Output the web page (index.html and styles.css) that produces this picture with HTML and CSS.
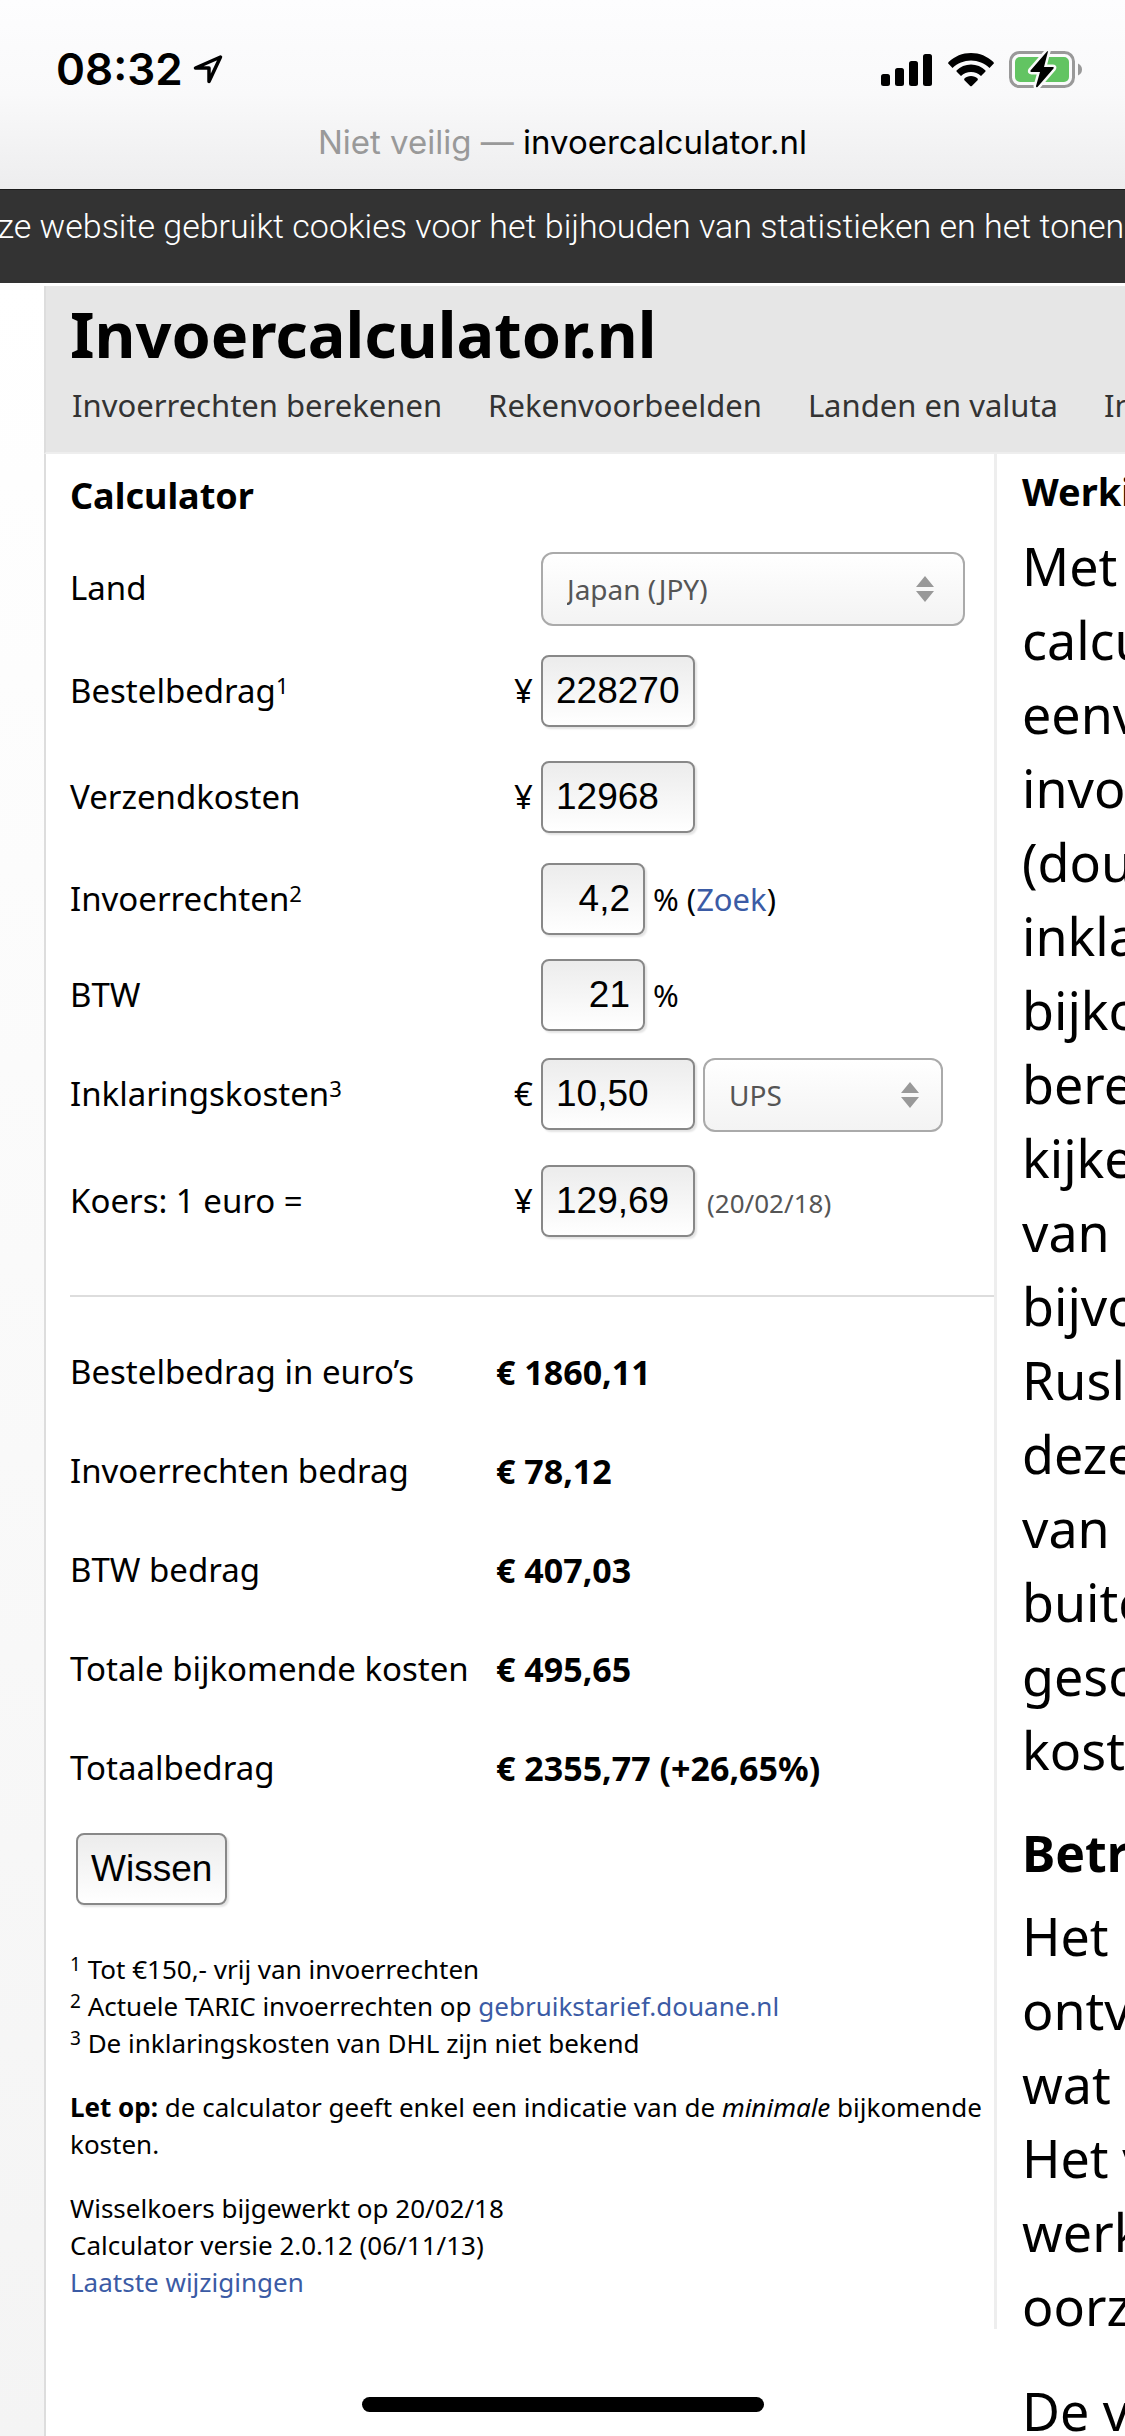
FILE: index.html
```html
<!DOCTYPE html>
<html lang="nl">
<head>
<meta charset="utf-8">
<meta name="viewport" content="width=device-width, initial-scale=1">
<title>Invoercalculator.nl</title>
<link rel="stylesheet" href="styles.css">
</head>
<body>
<div class="screen">
  <div class="browser-bar">
    <div class="status">
      <div class="status-time">
        <span>08:32</span>
        <svg class="icon-location" viewBox="0 0 30 30" aria-hidden="true"><path d="M27.500 3 2.500 14H16V27.500Z" fill="none" stroke="#000" stroke-width="3.500" stroke-linejoin="round"/></svg>
      </div>
      <div class="status-icons">
        <svg class="icon-signal" viewBox="0 0 52 36" aria-hidden="true"><rect x="0" y="23" width="9" height="12" rx="2.500"/><rect x="14" y="17" width="9" height="18" rx="2.500"/><rect x="28" y="10" width="9" height="25" rx="2.500"/><rect x="42" y="3" width="9" height="32" rx="2.500"/></svg>
        <svg class="icon-wifi" viewBox="0 0 46 36" aria-hidden="true"><path d="M23 2C14.500 2 6.600 5.300.600 11L0 12.300 4.500 17C9.500 12.300 16 9.500 23 9.500S36.500 12.300 41.500 17L46 12.300 45.400 11C39.400 5.300 31.500 2 23 2Z"/><path d="M23 13.500C17.500 13.500 12.300 15.700 8.500 19.500V20.500L13 25C15.700 22.400 19.200 21 23 21S30.300 22.400 33 25L37.500 20.500V19.500C33.700 15.700 28.500 13.500 23 13.500Z"/><path d="M23 25C20.400 25 18 26 16.200 27.700V29L22.200 35Q23 35.700 23.800 35L29.800 29V27.700C28 26 25.600 25 23 25Z"/></svg>
        <svg class="icon-battery" viewBox="0 0 74 40" aria-hidden="true"><rect x="1.500" y="3.500" width="63" height="34" rx="9" fill="none" stroke="#999" stroke-width="3"/><rect x="6" y="8" width="54" height="25" rx="5" fill="#62c462"/><path d="M69 14.500C72 16 73 18 73 20.500S72 25 69 26.500Z" fill="#999"/><path d="M39 2.500Q39.500 1.500 38 2.500L21.500 21.500Q21 23 22.500 23H31L27 37Q27 39 28.500 38L44.500 19.500Q45.500 18 44 18H35Z" fill="#000" stroke="#fafafa" stroke-width="5" stroke-linejoin="round" paint-order="stroke"/></svg>
      </div>
    </div>
    <div class="address"><span class="address-note">Niet veilig —</span> invoercalculator.nl</div>
  </div>
  <div class="cookie-bar"><p class="cookie-text">Deze website gebruikt cookies voor het bijhouden van statistieken en het tonen van</p></div>
  <div class="page">
    <header class="site-header">
      <h1 class="site-title">Invoercalculator.nl</h1>
      <nav class="site-nav">
        <a href="#berekenen">Invoerrechten berekenen</a>
        <a href="#voorbeelden">Rekenvoorbeelden</a>
        <a href="#landen">Landen en valuta</a>
        <a href="#informatie">Informatie</a>
      </nav>
    </header>
    <div class="columns">
      <main class="calculator">
        <h2 class="calc-title">Calculator</h2>
        <form class="calc-form">
          <div class="row row-short">
            <label for="land">Land</label>
            <div class="field"><span class="unit"></span><span class="select-wrap select-wide"><select id="land"><option>Japan (JPY)</option></select><svg class="arrows" viewBox="0 0 18 26" aria-hidden="true"><path d="M9 0 18 11H0ZM0 15H18L9 26Z"/></svg></span></div>
          </div>
          <div class="row">
            <label for="bestel">Bestelbedrag<sup>1</sup></label>
            <div class="field"><span class="unit">¥</span><input class="amount" id="bestel" type="text" value="228270"></div>
          </div>
          <div class="row">
            <label for="verzend">Verzendkosten</label>
            <div class="field"><span class="unit">¥</span><input class="amount" id="verzend" type="text" value="12968"></div>
          </div>
          <div class="row row-short">
            <label for="rechten">Invoerrechten<sup>2</sup></label>
            <div class="field"><span class="unit"></span><input class="percent" id="rechten" type="text" value="4,2"><span class="suffix">% (<a href="#zoek">Zoek</a>)</span></div>
          </div>
          <div class="row row-shorter">
            <label for="btw">BTW</label>
            <div class="field"><span class="unit"></span><input class="percent" id="btw" type="text" value="21"><span class="suffix">%</span></div>
          </div>
          <div class="row">
            <label for="inklaring">Inklaringskosten<sup>3</sup></label>
            <div class="field"><span class="unit">€</span><input class="amount" id="inklaring" type="text" value="10,50"><span class="select-wrap select-small"><select aria-label="Vervoerder"><option>UPS</option></select><svg class="arrows" viewBox="0 0 18 26" aria-hidden="true"><path d="M9 0 18 11H0ZM0 15H18L9 26Z"/></svg></span></div>
          </div>
          <div class="row">
            <label for="koers">Koers: 1 euro =</label>
            <div class="field"><span class="unit">¥</span><input class="amount" id="koers" type="text" value="129,69"><span class="rate-date">(20/02/18)</span></div>
          </div>
          <hr class="rule">
          <dl class="results">
            <dt>Bestelbedrag in euro’s</dt><dd>€ 1860,11</dd>
            <dt>Invoerrechten bedrag</dt><dd>€ 78,12</dd>
            <dt>BTW bedrag</dt><dd>€ 407,03</dd>
            <dt>Totale bijkomende kosten</dt><dd>€ 495,65</dd>
            <dt>Totaalbedrag</dt><dd>€ 2355,77 (+26,65%)</dd>
          </dl>
          <button class="reset" type="reset">Wissen</button>
        </form>
        <div class="notes">
          <p><sup>1</sup> Tot €150,- vrij van invoerrechten<br><sup>2</sup> Actuele TARIC invoerrechten op <a href="#tarief">gebruikstarief.douane.nl</a><br><sup>3</sup> De inklaringskosten van DHL zijn niet bekend</p>
          <p><strong>Let op:</strong> de calculator geeft enkel een indicatie van de <em>minimale</em> bijkomende kosten.</p>
          <p>Wisselkoers bijgewerkt op 20/02/18<br>Calculator versie 2.0.12 (06/11/13)<br><a href="#wijzigingen">Laatste wijzigingen</a></p>
        </div>
      </main>
      <aside class="info">
        <h2>Werking</h2>
        <p>Met deze<br>calculator<br>eenvoudig<br>invoerrechten<br>(douane)<br>inklaringskosten<br>bijkomende<br>berekenen<br>kijken<br>van<br>bijvoorbeeld<br>Rusland<br>deze<br>van<br>buiten<br>geschatte<br>kosten</p>
        <h3>Betrouwbaar</h3>
        <p>Het bedrag<br>ontvangt<br>wat<br>Het verschil<br>werkelijke<br>oorzaken</p>
        <p>De valuta</p>
      </aside>
    </div>
  </div>
  <div class="home-indicator"></div>
</div>
</body>
</html>
```

FILE: styles.css
```css
* {
  box-sizing: border-box;
}

body {
  margin: 0;
  font-family: "Noto Sans", sans-serif;
  color: #000;
  background: #fff;
}

a {
  color: #3b5ba5;
  text-decoration: none;
}

h1, h2, h3, p, dl, dd {
  margin: 0;
}

.screen {
  position: relative;
  height: 100vh;
  display: flex;
  flex-direction: column;
  overflow: hidden;
}

.browser-bar {
  flex: none;
  height: 189px;
  padding-top: 40px;
  background: linear-gradient(#fdfdfe, #f9f9fa 50%, #ededee);
  font-family: Inter, sans-serif;
}

.status {
  display: flex;
  justify-content: space-between;
  align-items: center;
  height: 58px;
  padding: 0 42px 0 56px;
}

.status-time {
  display: flex;
  align-items: center;
  gap: 10px;
  font-size: 44px;
  font-weight: 600;
}

.status-icons {
  display: flex;
  align-items: center;
  gap: 15px;
}

.icon-location {
  width: 30px;
  height: 30px;
}

.icon-signal {
  width: 52px;
  height: 36px;
}

.icon-wifi {
  width: 46px;
  height: 36px;
}

.icon-battery {
  width: 74px;
  height: 40px;
}

.address {
  margin-top: 22px;
  font-size: 33px;
  line-height: 44px;
  text-align: center;
}

.address-note {
  color: #999;
}

.cookie-bar {
  flex: none;
  height: 94px;
  padding-left: 18px;
  border-top: 1px solid #1c1c1c;
  background: #333;
  display: flex;
  justify-content: center;
}

.cookie-text {
  padding-top: 14px;
  font: 300 34px/44px Roboto, sans-serif;
  color: #fff;
  white-space: nowrap;
}

.page {
  flex: 1;
  display: flex;
  flex-direction: column;
  min-height: 0;
  padding: 3px 0 0 44px;
  background: linear-gradient(#fff, #f4f4f4);
}

.site-header {
  flex: none;
  height: 168px;
  padding: 12px 0 0 24px;
  border-left: 2px solid #ddd;
  border-bottom: 2px solid #eee;
  background: #e6e6e6;
}

.site-title {
  font-size: 63px;
  line-height: 72px;
}

.site-nav {
  display: flex;
  gap: 46px;
  margin-top: 11px;
  padding-left: 2px;
  white-space: nowrap;
  font-size: 31px;
  line-height: 48px;
}

.site-nav a {
  color: #333;
}

.columns {
  flex: 1;
  display: grid;
  grid-template-columns: 951px 1fr;
  align-items: start;
  border-left: 2px solid #ddd;
  background: #fff;
}

.calculator {
  min-height: 1875px;
  padding-left: 24px;
  border-right: 3px solid #eee;
}

.calc-title {
  padding: 16px 0 18px;
  font-size: 36px;
  line-height: 52px;
}

.calc-form {
  font-size: 33px;
}

.row {
  display: grid;
  grid-template-columns: 444px 1fr;
  align-items: baseline;
  align-content: center;
  height: 106px;
}

.row-short {
  height: 98px;
}

.row-shorter {
  height: 94px;
}

.field {
  display: flex;
  align-items: baseline;
}

.unit {
  width: 27px;
}

sup {
  font-size: 22px;
  line-height: 0;
  vertical-align: 9px;
}

input,
.reset {
  height: 72px;
  border: 2px solid #888;
  border-radius: 8px;
  background: linear-gradient(#ececec, #fff);
  box-shadow: 2px 2px 2px #e4e4e4;
  font: 37px "Liberation Sans", sans-serif;
  color: #000;
  padding: 0 13px;
}

.amount {
  width: 154px;
}

.percent {
  width: 104px;
  text-align: right;
}

.suffix {
  margin-left: 8px;
  font-size: 31px;
}

.rate-date {
  margin-left: 12px;
  font-size: 26px;
  color: #555;
}

.select-wrap {
  position: relative;
  display: flex;
  height: 74px;
}

.select-wide {
  width: 424px;
}

.select-small {
  width: 240px;
  margin-left: 8px;
}

select {
  width: 100%;
  height: 100%;
  padding: 0 24px;
  appearance: none;
  border: 2px solid #aaa;
  border-radius: 12px;
  background: linear-gradient(#fff, #f3f3f3);
  font: 28px "Noto Sans", sans-serif;
  color: #555;
}

.arrows {
  position: absolute;
  top: 24px;
  right: 31px;
  width: 18px;
  height: 26px;
  fill: #999;
}

.select-small .arrows {
  right: 24px;
}

.rule {
  height: 2px;
  margin: 41px 0 52px;
  border: 0;
  background: #ddd;
}

.results {
  display: grid;
  grid-template-columns: 426px 1fr;
  row-gap: 53px;
  line-height: 46px;
}

.results dd {
  font-size: 34px;
  font-weight: 700;
}

.reset {
  margin: 42px 0 46px 6px;
  display: block;
}

.notes {
  display: flex;
  flex-direction: column;
  gap: 27px;
  font-size: 26px;
  line-height: 37px;
}

.notes sup {
  font-size: 19px;
  vertical-align: 8px;
}

.info {
  padding: 11px 0 0 25px;
  white-space: nowrap;
  font-size: 52px;
  line-height: 74px;
  overflow: hidden;
}

.info h2 {
  margin-bottom: 12px;
  font-size: 38px;
  line-height: 52px;
}

.info h3 {
  margin: 28px 0 8px;
  font-size: 50px;
  line-height: 76px;
}

.info p + p {
  margin-top: 31px;
}

.home-indicator {
  position: absolute;
  left: 50%;
  bottom: 24px;
  width: 402px;
  height: 15px;
  margin-left: -201px;
  border-radius: 8px;
  background: #000;
}
```
